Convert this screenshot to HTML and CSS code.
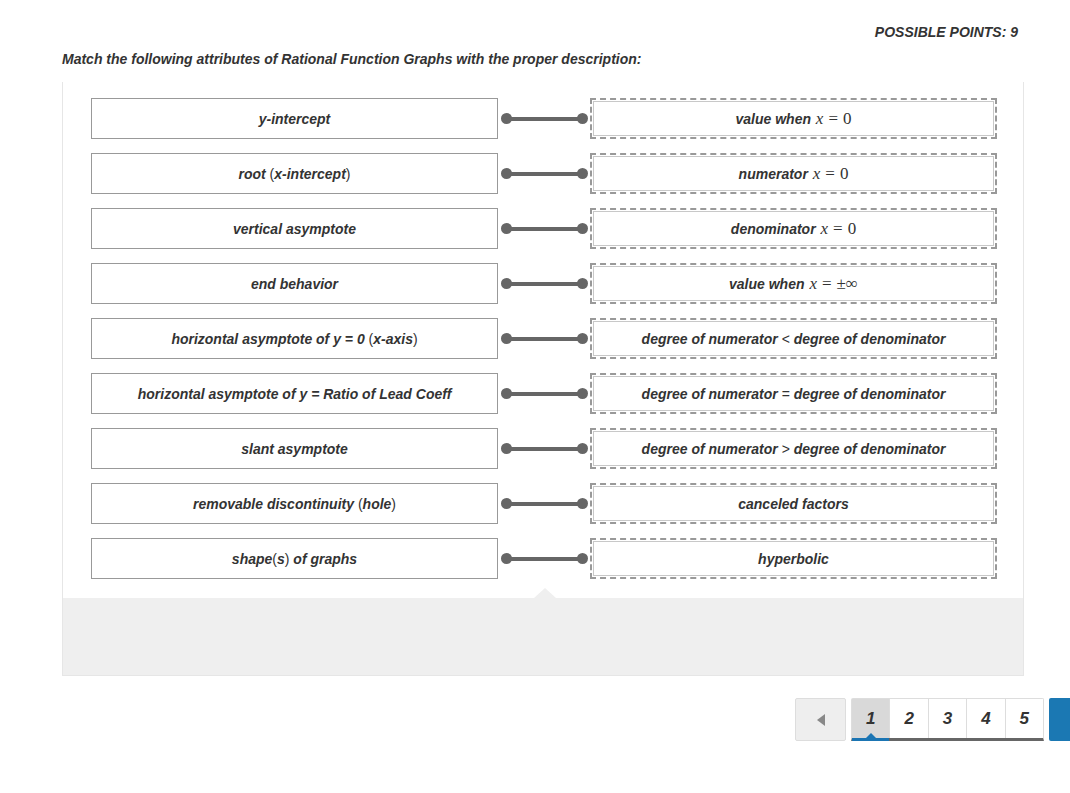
FILE: index.html
```html
<!DOCTYPE html>
<html>
<head>
<meta charset="utf-8">
<link rel="stylesheet" href="styles.css">
</head>
<body>
<div class="page">
  <div class="points">POSSIBLE POINTS: 9</div>
  <div class="question">Match the following attributes of Rational Function Graphs with the proper description:</div>
  <div class="panel">
    <div class="rows">
      <div class="row">
        <div class="term">y-intercept</div>
        <div class="conn"><span class="dot"></span><span class="bar"></span><span class="dot"></span></div>
        <div class="drop"><div class="def">value when <span class="math"><i>x</i><span class="eq">=</span>0</span></div></div>
      </div>
      <div class="row">
        <div class="term">root <span class="par">(</span>x-intercept<span class="par">)</span></div>
        <div class="conn"><span class="dot"></span><span class="bar"></span><span class="dot"></span></div>
        <div class="drop"><div class="def">numerator <span class="math"><i>x</i><span class="eq">=</span>0</span></div></div>
      </div>
      <div class="row">
        <div class="term">vertical asymptote</div>
        <div class="conn"><span class="dot"></span><span class="bar"></span><span class="dot"></span></div>
        <div class="drop"><div class="def">denominator <span class="math"><i>x</i><span class="eq">=</span>0</span></div></div>
      </div>
      <div class="row">
        <div class="term">end behavior</div>
        <div class="conn"><span class="dot"></span><span class="bar"></span><span class="dot"></span></div>
        <div class="drop"><div class="def">value when <span class="math"><i>x</i><span class="eq">=</span>±∞</span></div></div>
      </div>
      <div class="row">
        <div class="term">horizontal asymptote of y = 0 <span class="par">(</span>x-axis<span class="par">)</span></div>
        <div class="conn"><span class="dot"></span><span class="bar"></span><span class="dot"></span></div>
        <div class="drop"><div class="def">degree of numerator <span class="op">&lt;</span> degree of denominator</div></div>
      </div>
      <div class="row">
        <div class="term">horizontal asymptote of y = Ratio of Lead Coeff</div>
        <div class="conn"><span class="dot"></span><span class="bar"></span><span class="dot"></span></div>
        <div class="drop"><div class="def">degree of numerator <span class="op">=</span> degree of denominator</div></div>
      </div>
      <div class="row">
        <div class="term">slant asymptote</div>
        <div class="conn"><span class="dot"></span><span class="bar"></span><span class="dot"></span></div>
        <div class="drop"><div class="def">degree of numerator <span class="op">&gt;</span> degree of denominator</div></div>
      </div>
      <div class="row">
        <div class="term">removable discontinuity <span class="par">(</span>hole<span class="par">)</span></div>
        <div class="conn"><span class="dot"></span><span class="bar"></span><span class="dot"></span></div>
        <div class="drop"><div class="def">canceled factors</div></div>
      </div>
      <div class="row">
        <div class="term">shape<span class="par">(</span>s<span class="par">)</span> of graphs</div>
        <div class="conn"><span class="dot"></span><span class="bar"></span><span class="dot"></span></div>
        <div class="drop"><div class="def">hyperbolic</div></div>
      </div>
    </div>
    <div class="tray"><span class="notch"></span></div>
  </div>
  <div class="pager">
    <button class="prev"><span class="tri"></span></button>
    <div class="pages">
      <span class="pg active">1</span>
      <span class="pg">2</span>
      <span class="pg">3</span>
      <span class="pg">4</span>
      <span class="pg">5</span>
    </div>
    <button class="next"></button>
  </div>
</div>
</body>
</html>
```

FILE: styles.css
```css
html, body {
  margin: 0;
  padding: 0;
  background: #fff;
}
body {
  font-family: "Liberation Sans", Arial, sans-serif;
  font-weight: bold;
  font-style: italic;
  font-size: 14px;
  color: #333;
  width: 1070px;
  overflow: hidden;
}
.page {
  padding: 24px 0 0 62px;
  width: 962px;
}
.points {
  text-align: right;
  padding-right: 6px;
  line-height: 16px;
  height: 16px;
}
.question {
  margin-top: 11px;
  line-height: 16px;
  height: 16px;
}
.panel {
  margin-top: 15px;
  border: 1px solid #e6e6e6;
  border-top: none;
  width: 960px;
}
.rows {
  display: flex;
  flex-direction: column;
  gap: 14px;
  padding: 16px 0 19px 28px;
}
.row {
  display: flex;
  align-items: center;
  height: 41px;
}
.term {
  box-sizing: border-box;
  width: 407px;
  height: 41px;
  border: 1px solid #999;
  display: flex;
  align-items: center;
  justify-content: center;
  white-space: pre;
}
.par {
  font-style: normal;
  font-weight: normal;
}
.op {
  font-style: normal;
  font-weight: normal;
}
.conn {
  width: 92px;
  display: flex;
  align-items: center;
  padding: 0 2px 0 3px;
  box-sizing: border-box;
}
.dot {
  width: 11px;
  height: 11px;
  border-radius: 50%;
  background: #666;
  flex: none;
}
.bar {
  flex: 1;
  height: 4px;
  background: #666;
  margin: 0 -2px;
}
.drop {
  box-sizing: border-box;
  width: 407px;
  height: 41px;
  border: 2px dashed #999;
  padding: 1px;
}
.def {
  box-sizing: border-box;
  height: 100%;
  border: 1px solid #c8c8c8;
  display: flex;
  align-items: center;
  justify-content: center;
  white-space: pre;
}
.math {
  font-family: "Liberation Serif", "Times New Roman", serif;
  font-style: normal;
  font-weight: normal;
  font-size: 17px;
  margin-left: 1px;
}
.math i {
  font-style: italic;
}
.eq {
  margin: 0 5px;
}
.tray {
  position: relative;
  height: 77px;
  background: #efefef;
}
.notch {
  position: absolute;
  left: 471px;
  top: -10px;
  width: 0;
  height: 0;
  border-left: 11px solid transparent;
  border-right: 11px solid transparent;
  border-bottom: 10px solid #efefef;
}
.pager {
  display: flex;
  justify-content: flex-end;
  margin-top: 22px;
  margin-right: -55px;
  gap: 5px;
  height: 43px;
}
.prev {
  box-sizing: border-box;
  width: 51px;
  height: 43px;
  background: #eee;
  border: 1px solid #ddd;
  border-radius: 2px;
  display: flex;
  align-items: center;
  justify-content: center;
  padding: 0;
}
.tri {
  width: 0;
  height: 0;
  border-top: 6px solid transparent;
  border-bottom: 6px solid transparent;
  border-right: 8px solid #888;
}
.pages {
  display: flex;
  box-sizing: border-box;
  height: 43px;
  border: 1px solid #ddd;
  border-bottom: 3px solid #666;
  border-radius: 2px 2px 0 0;
}
.pg {
  position: relative;
  width: 37.4px;
  display: flex;
  align-items: center;
  justify-content: center;
  font-size: 17px;
  color: #333;
  border-left: 1px solid #ddd;
  background: #fff;
}
.pg:first-child {
  border-left: none;
}
.pg.active {
  background: #d9d9d9;
}
.pg.active::after {
  content: "";
  position: absolute;
  left: 0;
  right: 0;
  bottom: -3px;
  height: 3px;
  background: #1b75b3;
}
.pg.active::before {
  content: "";
  position: absolute;
  left: 14px;
  bottom: 0;
  border-left: 5px solid transparent;
  border-right: 5px solid transparent;
  border-bottom: 5px solid #1b75b3;
}
.next {
  width: 30px;
  height: 43px;
  background: #1b78b3;
  border: none;
  border-radius: 2px 0 0 2px;
  padding: 0;
}
```
